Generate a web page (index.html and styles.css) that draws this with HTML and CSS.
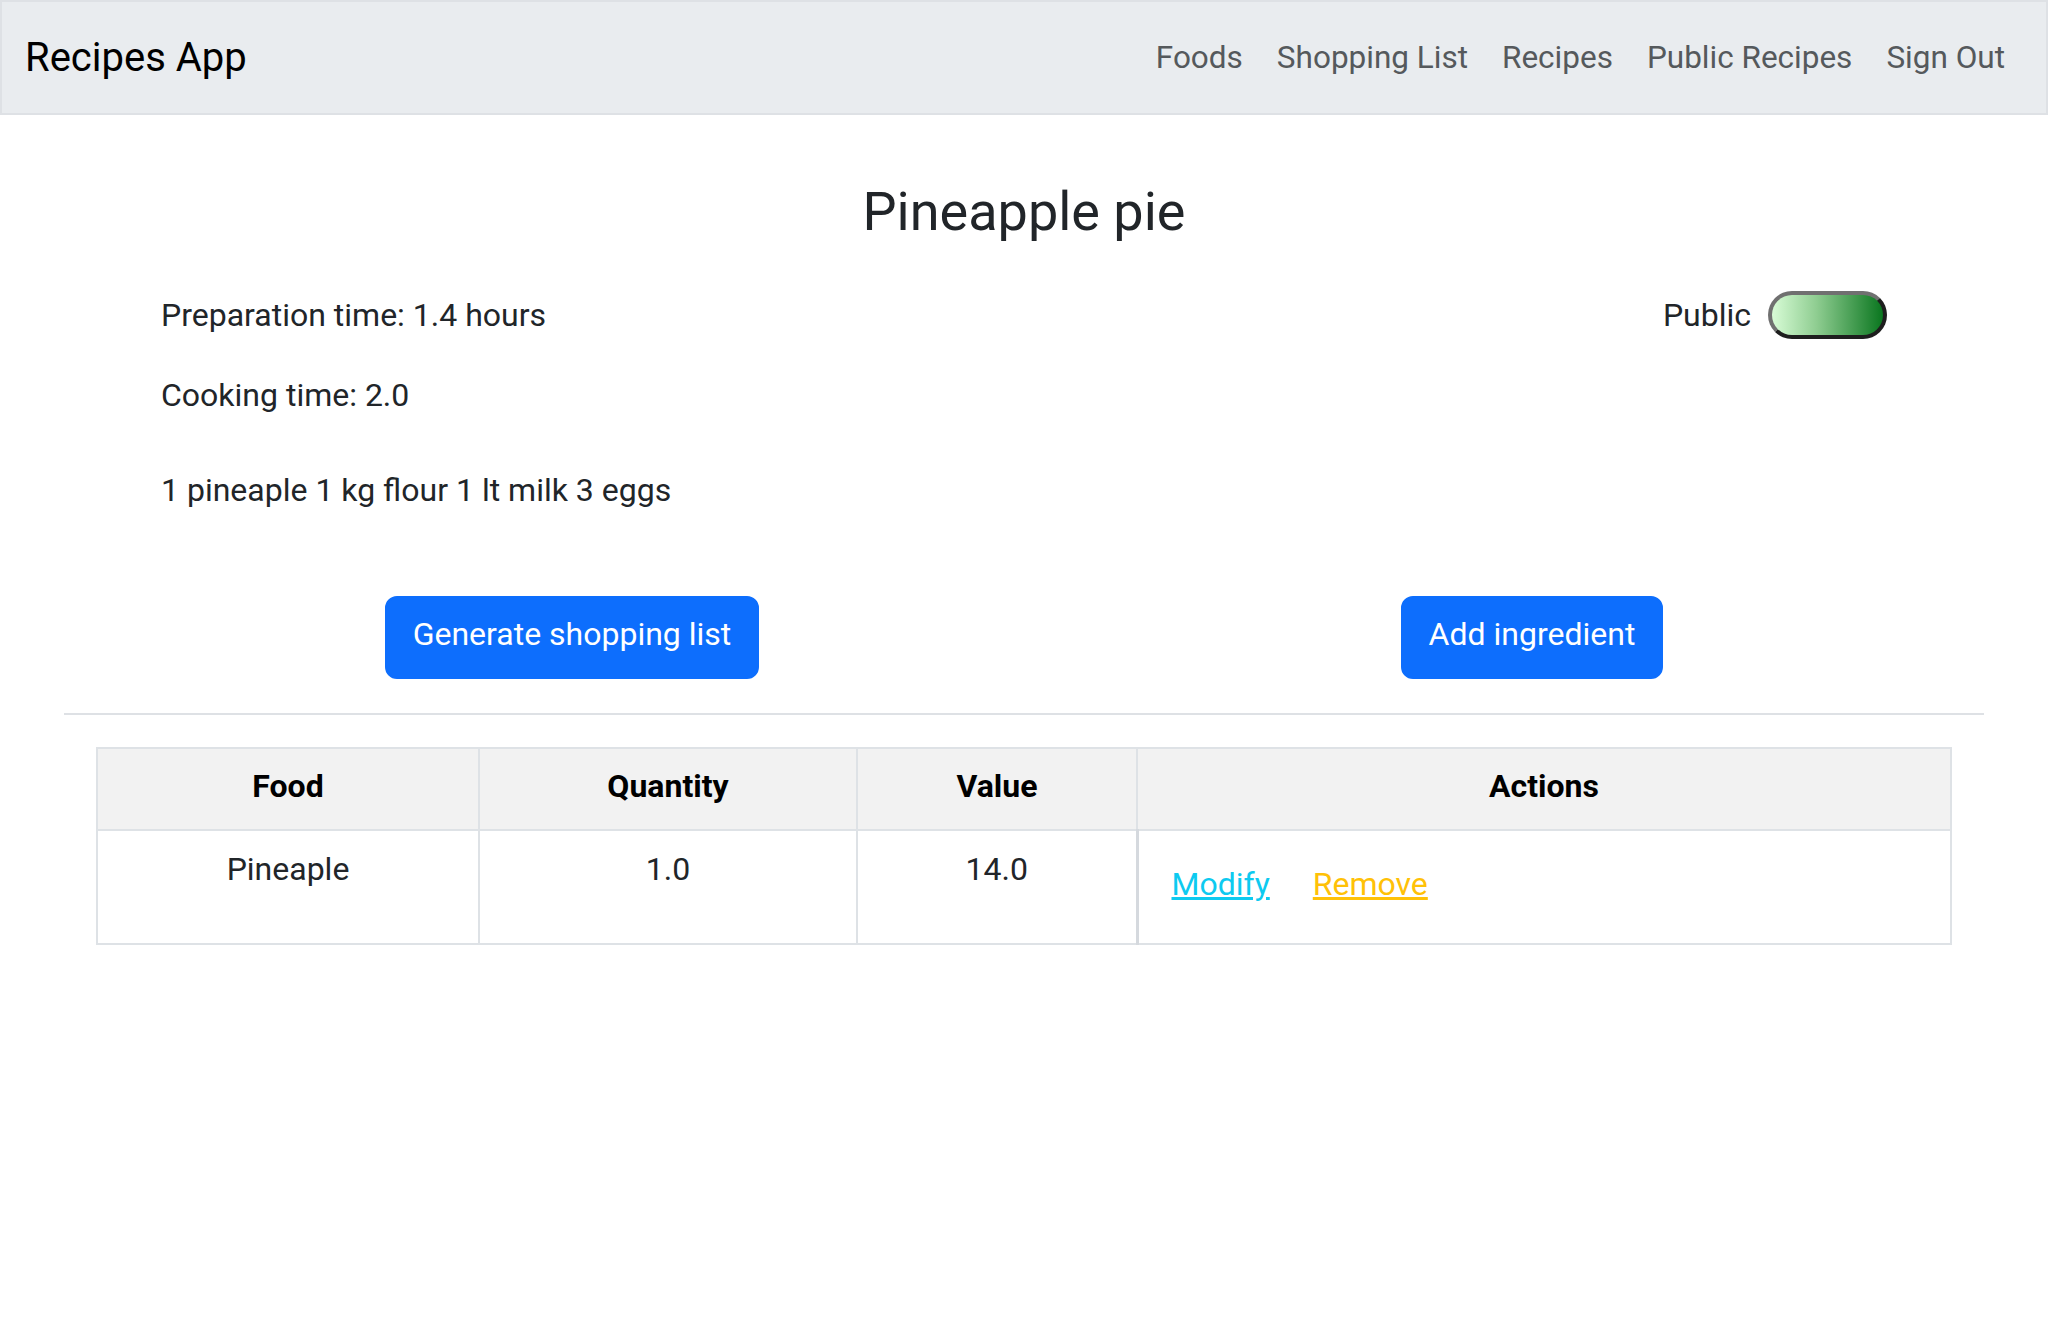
FILE: index.html
```html
<!DOCTYPE html>
<html lang="en">
<head>
<meta charset="utf-8">
<title>Recipes App</title>
<link rel="stylesheet" href="styles.css">
</head>
<body>
<nav class="navbar">
  <a class="brand" href="#">Recipes App</a>
  <ul class="nav-links">
    <li><a href="#">Foods</a></li>
    <li><a href="#">Shopping List</a></li>
    <li><a href="#">Recipes</a></li>
    <li><a href="#">Public Recipes</a></li>
    <li><a href="#">Sign Out</a></li>
  </ul>
</nav>
<main class="container">
  <h2 class="title">Pineapple pie</h2>
  <div class="info">
    <div class="times">
      <p class="prep">Preparation time: 1.4 hours</p>
      <p class="cook">Cooking time: 2.0</p>
    </div>
    <div class="public">
      <span class="public-label">Public</span>
      <span class="toggle"></span>
    </div>
  </div>
  <p class="ingredients">1 pineaple 1 kg flour 1 lt milk 3 eggs</p>
  <div class="button-row">
    <div class="button-col"><button class="btn">Generate shopping list</button></div>
    <div class="button-col"><button class="btn">Add ingredient</button></div>
  </div>
  <hr class="divider">
  <table class="food-table">
    <thead>
      <tr>
        <th class="c-food">Food</th>
        <th class="c-qty">Quantity</th>
        <th class="c-val">Value</th>
        <th class="c-act">Actions</th>
      </tr>
    </thead>
    <tbody>
      <tr>
        <td>Pineaple</td>
        <td>1.0</td>
        <td>14.0</td>
        <td class="act-cell"><a href="#" class="link-btn modify">Modify</a><a href="#" class="link-btn remove">Remove</a></td>
      </tr>
    </tbody>
  </table>
</main>
</body>
</html>
```
FILE: styles.css
```css
* { box-sizing: border-box; }
html, body { margin: 0; padding: 0; }
body {
  font-family: Roboto, "Noto Sans", "Liberation Sans", sans-serif;
  font-size: 32px;
  line-height: 1.5;
  color: #212529;
  background: #fff;
}
.navbar {
  height: 115px;
  display: flex;
  align-items: center;
  justify-content: space-between;
  background: #e9ecef;
  border: 2px solid #dee1e5;
  padding: 0 24px 0 23px;
}
.brand {
  font-size: 40px;
  color: #000;
  text-decoration: none;
  line-height: 1.5;
}
.nav-links {
  list-style: none;
  margin: 0;
  padding: 0;
  display: flex;
}
.nav-links a {
  display: block;
  padding: 8px 17px;
  color: #55595c;
  text-decoration: none;
  font-size: 31.5px;
}
.container {
  width: 1920px;
  margin: 0 auto;
}
.title {
  margin: 65px 0 0;
  text-align: center;
  font-size: 54px;
  font-weight: 400;
  line-height: 1.2;
  color: #212529;
}
.info {
  display: flex;
  justify-content: space-between;
  align-items: flex-start;
  padding: 0 97px;
  margin-top: 46px;
}
.times p { margin: 0; }
.times .cook { margin-top: 32px; }
.public {
  display: flex;
  align-items: center;
  gap: 17px;
  margin-top: 0;
}
.toggle {
  display: block;
  width: 119px;
  height: 48px;
  border-radius: 24px;
  border: 4px solid;
  border-color: #707070 #1e1e1e #1e1e1e #707070;
  background: linear-gradient(to right, #d8fcd6, #8fcd91 40%, #0a761f);
}
.ingredients {
  margin: 47px 0 0;
  padding: 0 97px;
}
.button-row {
  display: grid;
  grid-template-columns: 960px 960px;
  margin: 82px 0 0 28px;
}
.button-col {
  display: flex;
  justify-content: center;
}
.btn {
  font-family: inherit;
  font-size: 32px;
  line-height: 1.5;
  color: #fff;
  background: #0d6efd;
  border: 2px solid #0d6efd;
  border-radius: 12px;
  padding: 12px 26px 20px;
  height: 83px;
}
.divider {
  margin: 34px 0 0;
  border: 0;
  border-top: 2px solid #dee1e5;
}
.food-table {
  width: 1854px;
  margin: 32px auto 0;
  border-collapse: collapse;
  table-layout: fixed;
}
.food-table th, .food-table td {
  border: 2px solid #dee2e6;
  text-align: center;
  vertical-align: top;
  padding: 14px 17px;
}
.food-table th {
  background: #f2f2f2;
  color: #000;
  font-weight: 700;
  height: 82px;
  vertical-align: middle;
  padding: 12px 17px 18px;
}
.c-food { width: 382px; }
.c-qty { width: 378px; }
.c-val { width: 280px; }
.c-act { width: 814px; }
.food-table td { height: 114px; }
.food-table td.act-cell {
  text-align: left;
  border-left: 3px solid #d5d9de;
  padding: 15px 17px;
}
.link-btn {
  display: inline-block;
  padding: 14px 16px 8px;
  margin-right: 11px;
}
.modify { color: #0dcaf0; }
.remove { color: #ffc107; }
```
